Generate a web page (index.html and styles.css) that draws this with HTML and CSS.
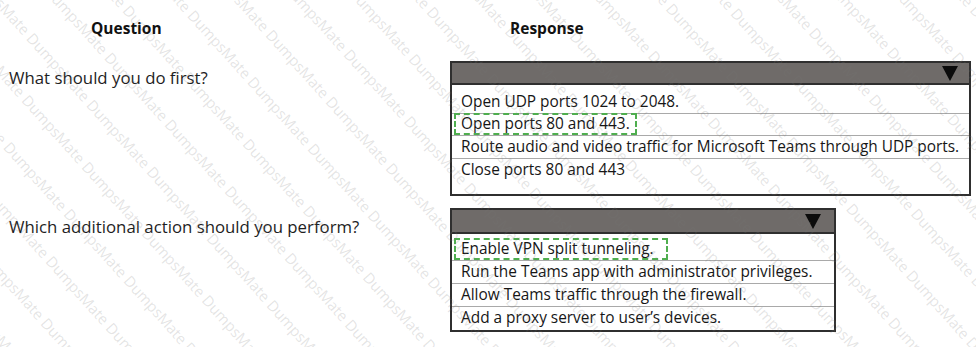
FILE: index.html
```html
<!DOCTYPE html>
<html lang="en">
<head>
<meta charset="utf-8">
<title>Question / Response</title>
<link rel="stylesheet" href="styles.css">
</head>
<body>
<div class="page">
  <div class="hdr hdr-q">Question</div>
  <div class="hdr hdr-r">Response</div>

  <div class="q q1">What should you do first?</div>
  <div class="box box1">
    <div class="box-head"><span class="caret"></span></div>
    <ul class="opts">
      <li class="opt first">Open UDP ports 1024 to 2048.</li>
      <li class="opt"><span class="pick pick1">Open ports 80 and 443.</span></li>
      <li class="opt">Route audio and video traffic for Microsoft Teams through UDP ports.</li>
      <li class="opt last">Close ports 80 and 443</li>
    </ul>
  </div>

  <div class="q q2">Which additional action should you perform?</div>
  <div class="box box2">
    <div class="box-head"><span class="caret"></span></div>
    <ul class="opts">
      <li class="opt first"><span class="pick pick2">Enable VPN split tunneling.</span></li>
      <li class="opt">Run the Teams app with administrator privileges.</li>
      <li class="opt">Allow Teams traffic through the firewall.</li>
      <li class="opt last2">Add a proxy server to user’s devices.</li>
    </ul>
  </div>
</div>
<div class="watermark" aria-hidden="true"><div class="wm-rot" id="wm"></div></div>
<script src="script.js"></script>
</body>
</html>
```

FILE: styles.css
```css
html, body {
  margin: 0;
  padding: 0;
  background: #ffffff;
}
body {
  font-family: "Open Sans", "Noto Sans", "DejaVu Sans", sans-serif;
  color: #1e1e1e;
  width: 976px;
  height: 347px;
  overflow: hidden;
  position: relative;
}
.page {
  display: grid;
  grid-template-columns: 450px 521px;
  grid-template-rows: 20px auto auto;
  row-gap: 0;
  padding-top: 18px;
}
.hdr {
  font-weight: 700;
  font-size: 15.5px;
  line-height: 20px;
  color: #111;
}
.hdr-q { padding-left: 91px; }
.hdr-r { padding-left: 60px; }

.q {
  font-size: 16.8px;
  line-height: 20px;
  padding-left: 9px;
  color: #1e1e1e;
}
.q1 { padding-top: 30px; }
.q2 { padding-top: 21px; }

.box {
  border: 2px solid #2f2f2f;
  box-sizing: border-box;
  background: transparent;
}
.box1 { margin-top: 23px; width: 521px; }
.box2 { margin-top: 12px; width: 386px; }

.box-head {
  background: #6f6b69;
  border-bottom: 2px solid #2f2f2f;
  display: flex;
  justify-content: flex-end;
  align-items: center;
}
.box1 .box-head { height: 20px; }
.box2 .box-head { height: 22px; }

.caret {
  width: 0;
  height: 0;
  border-left: 8.5px solid transparent;
  border-right: 8.5px solid transparent;
  border-top: 15px solid #0c0c0c;
  margin-right: 11px;
}
.box2 .caret { margin-right: 13px; }

.opts {
  list-style: none;
  margin: 0;
  padding: 0;
}
.opt {
  font-size: 15.4px;
  line-height: 22px;
  padding-left: 9px;
  border-top: 1px solid #a9a9a9;
  color: #161616;
  display: flex;
  white-space: nowrap;
}
.opt.first {
  border-top: none;
  padding-top: 6px;
}
.opt.last { padding-bottom: 13px; }
.opt.last2 { padding-bottom: 1px; }

.pick {
  border: 2px dashed #4fae4f;
  margin-left: -7px;
  padding: 0 5px;
  line-height: 18px;
  margin-top: -1px;
}
.pick2 {
  padding-right: 12px;
  margin-top: -2px;
}

.watermark {
  position: absolute;
  left: 0;
  top: 0;
  width: 976px;
  height: 347px;
  overflow: hidden;
  pointer-events: none;
}
.wm-rot {
  position: absolute;
  left: -700px;
  top: -900px;
  width: 2400px;
  transform: rotate(48deg);
  transform-origin: 1200px 1200px;
  font-family: "Open Sans", sans-serif;
  font-size: 15px;
  line-height: 45px;
  color: rgba(120, 120, 120, 0.2);
  white-space: nowrap;
}
.wm-line { display: block; }
```

FILE: script.js
```js
(function () {
  var host = document.getElementById('wm');
  var word = 'DumpsMate';
  var lines = 56;
  var perLine = 36;
  var frag = document.createDocumentFragment();
  for (var i = 0; i < lines; i++) {
    var d = document.createElement('span');
    d.className = 'wm-line';
    var parts = [];
    for (var j = 0; j < perLine; j++) parts.push(word);
    d.textContent = parts.join('   ');
    d.style.paddingLeft = ((i * 23) % 70) + 'px';
    frag.appendChild(d);
  }
  host.appendChild(frag);
})();
```
